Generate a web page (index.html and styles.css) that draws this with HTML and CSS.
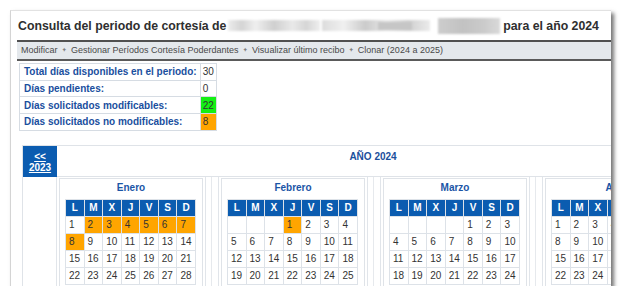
FILE: index.html
```html
<!DOCTYPE html>
<html lang="es">
<head>
<meta charset="utf-8">
<title>Consulta del periodo de cortesía</title>
<link rel="stylesheet" href="styles.css">
</head>
<body>
<div class="panel">
  <h1 class="title">Consulta del periodo de cortesía de <span class="blur"><span class="b1"></span><span class="b2"></span><span class="b4"></span><span class="b3"></span></span> para el año 2024</h1>
  <div class="navbar">
    <span>Modificar</span><span class="sep">✦</span><span>Gestionar Períodos Cortesía Poderdantes</span><span class="sep">✦</span><span>Visualizar último recibo</span><span class="sep">✦</span><span>Clonar (2024 a 2025)</span>
  </div>
  <table class="summary">
    <tr><td class="lbl">Total días disponibles en el periodo:</td><td class="val">30</td></tr>
    <tr><td class="lbl">Días pendientes:</td><td class="val">0</td></tr>
    <tr><td class="lbl">Días solicitados modificables:</td><td class="val green">22</td></tr>
    <tr><td class="lbl">Días solicitados no modificables:</td><td class="val orange">8</td></tr>
  </table>

  <div class="cal">
    <div class="cal-head">
      <div class="prev"><a>&lt;&lt;</a><a>2023</a></div>
      <div class="year">AÑO 2024</div>
    </div>
    <div class="cal-body">
      <div class="gutter"></div>
      <div class="mcol">
        <div class="month">
          <div class="mname">Enero</div>
          <table class="days">
            <tr><th>L</th><th>M</th><th>X</th><th>J</th><th>V</th><th>S</th><th>D</th></tr>
            <tr><td>1</td><td class="o">2</td><td class="o">3</td><td class="o">4</td><td class="o">5</td><td class="o">6</td><td class="o">7</td></tr>
            <tr><td class="o">8</td><td>9</td><td>10</td><td>11</td><td>12</td><td>13</td><td>14</td></tr>
            <tr><td>15</td><td>16</td><td>17</td><td>18</td><td>19</td><td>20</td><td>21</td></tr>
            <tr><td>22</td><td>23</td><td>24</td><td>25</td><td>26</td><td>27</td><td>28</td></tr>
          </table>
        </div>
      </div>
      <div class="msep"></div>
      <div class="mcol">
        <div class="month">
          <div class="mname">Febrero</div>
          <table class="days">
            <tr><th>L</th><th>M</th><th>X</th><th>J</th><th>V</th><th>S</th><th>D</th></tr>
            <tr><td></td><td></td><td></td><td class="o">1</td><td>2</td><td>3</td><td>4</td></tr>
            <tr><td>5</td><td>6</td><td>7</td><td>8</td><td>9</td><td>10</td><td>11</td></tr>
            <tr><td>12</td><td>13</td><td>14</td><td>15</td><td>16</td><td>17</td><td>18</td></tr>
            <tr><td>19</td><td>20</td><td>21</td><td>22</td><td>23</td><td>24</td><td>25</td></tr>
          </table>
        </div>
      </div>
      <div class="msep"></div>
      <div class="mcol">
        <div class="month">
          <div class="mname">Marzo</div>
          <table class="days">
            <tr><th>L</th><th>M</th><th>X</th><th>J</th><th>V</th><th>S</th><th>D</th></tr>
            <tr><td></td><td></td><td></td><td></td><td>1</td><td>2</td><td>3</td></tr>
            <tr><td>4</td><td>5</td><td>6</td><td>7</td><td>8</td><td>9</td><td>10</td></tr>
            <tr><td>11</td><td>12</td><td>13</td><td>14</td><td>15</td><td>16</td><td>17</td></tr>
            <tr><td>18</td><td>19</td><td>20</td><td>21</td><td>22</td><td>23</td><td>24</td></tr>
          </table>
        </div>
      </div>
      <div class="msep"></div>
      <div class="mcol">
        <div class="month">
          <div class="mname">Abril</div>
          <table class="days">
            <tr><th>L</th><th>M</th><th>X</th><th>J</th><th>V</th><th>S</th><th>D</th></tr>
            <tr><td>1</td><td>2</td><td>3</td><td>4</td><td>5</td><td>6</td><td>7</td></tr>
            <tr><td>8</td><td>9</td><td>10</td><td>11</td><td>12</td><td>13</td><td>14</td></tr>
            <tr><td>15</td><td>16</td><td>17</td><td>18</td><td>19</td><td>20</td><td>21</td></tr>
            <tr><td>22</td><td>23</td><td>24</td><td>25</td><td>26</td><td>27</td><td>28</td></tr>
          </table>
        </div>
      </div>
    </div>
  </div>
</div>
</body>
</html>
```

FILE: styles.css
```css
html, body {
  margin: 0;
  padding: 0;
  background: #fff;
}
body {
  font-family: "Liberation Sans", Arial, sans-serif;
  color: #333;
}
.panel {
  margin: 10px 0 0 10px;
  width: 600px;
  height: 275px;
  background: #fff;
  border-left: 1px solid #d4d4d4;
  border-top: 1px solid #e2e2e2;
  box-shadow: 3px 3px 4px rgba(0, 0, 0, 0.55);
  overflow: hidden;
}
.title {
  margin: 7px 0 0 7px;
  font-size: 12.3px;
  line-height: 15px;
  height: 15px;
  font-weight: bold;
  color: #2f2f2f;
  white-space: nowrap;
}
.blur {
  display: inline-block;
  position: relative;
  width: 274px;
  height: 16px;
  vertical-align: -4px;
  margin: 0 -2px;
  filter: blur(1.2px);
}
.blur span {
  position: absolute;
  top: 2px;
  height: 11px;
}
.blur .b1 { left: 0; width: 92px; background: linear-gradient(90deg, #ececec, #d4d4d4 15%, #efefef 30%, #cfcfcf 50%, #e9e9e9 70%, #d6d6d6 85%, #eeeeee); }
.blur .b2 { left: 94px; width: 108px; background: linear-gradient(90deg, #dcdcdc, #f0f0f0 20%, #cbcbcb 40%, #e8e8e8 60%, #d0d0d0 80%, #ebebeb); }
.blur .b4 { left: 150px; width: 34px; top: 4px; height: 8px; background: #c6c6c6; }
.blur .b3 { left: 210px; width: 62px; top: 0; height: 16px; background: linear-gradient(90deg, #cdcdcd, #c2c2c2 40%, #cbcbcb 75%, #dadada); }

.navbar {
  margin: 7px 0 0 6px;
  border-top: 2px solid #505050;
  border-bottom: 2px solid #5a5a5a;
  background: #e4e8ec;
  height: 17px;
  line-height: 17px;
  padding-left: 4px;
  font-size: 9px;
  color: #4a4a4a;
  white-space: nowrap;
}
.navbar .sep {
  font-family: "DejaVu Sans", sans-serif;
  font-size: 6.5px;
  color: #808080;
  margin: 0 4px;
  vertical-align: 1px;
}

.summary {
  margin: 2px 0 0 8px;
  border-collapse: collapse;
  border: 1px solid #d6dce3;
}
.summary td {
  border: 1px solid #d6dce3;
  height: 15.7px;
  padding: 0;
  line-height: 15px;
}
.summary .lbl {
  color: #1a4f9e;
  font-weight: bold;
  font-size: 10px;
  padding: 0 3px 0 4px;
  white-space: nowrap;
}
.summary .val {
  color: #333;
  font-size: 10px;
  padding: 0 1px 0 2px;
  width: 12px;
}
.summary .green { background: #14f014; }
.summary .orange { background: #ffa500; }

.cal {
  margin: 14px 0 0 11px;
  width: 800px;
  border-top: 1px solid #dfe3e8;
  border-left: 1px solid #dfe3e8;
}
.cal-head {
  display: flex;
  height: 30px;
  border-bottom: 1px solid #dfe3e8;
}
.prev {
  width: 34px;
  background: #0b5cb0;
  display: flex;
  flex-direction: column;
  align-items: center;
  padding-top: 5px;
  box-sizing: border-box;
  height: 31px;
}
.prev a {
  color: #fff;
  font-weight: bold;
  font-size: 10px;
  line-height: 11px;
  text-decoration: underline;
}
.year {
  width: 632px;
  text-align: center;
  color: #1b4f9c;
  font-weight: bold;
  font-size: 10px;
  padding-top: 4px;
  line-height: 13px;
}
.cal-body {
  display: flex;
  align-items: flex-start;
}
.gutter {
  width: 33px;
  height: 120px;
}
.mcol {
  border-left: 1px solid #e1e5ea;
  border-right: 1px solid #e1e5ea;
  padding: 1px 2px 0 2px;
  height: 120px;
}
.msep {
  width: 5px;
  height: 120px;
  border-right: 1px solid #e6e9ed;
  margin-right: 6px;
}
.month {
  width: 142px;
  border: 1px solid #dfe3e8;
  height: 130px;
}
.mname {
  text-align: center;
  color: #1b55a6;
  font-weight: bold;
  font-size: 10px;
  line-height: 14px;
  height: 20px;
  padding-top: 2px;
  box-sizing: border-box;
}
.days {
  margin-left: 5px;
  width: 131px;
  table-layout: fixed;
  border-collapse: separate;
  border-spacing: 1px;
  background: #dde2e8;
}
.days th {
  background: #0b5cb0;
  color: #fff;
  font-size: 10px;
  font-weight: bold;
  height: 16px;
  line-height: 16px;
  padding: 0;
  text-align: center;
}
.days td {
  background: #fff;
  font-size: 10px;
  color: #333;
  height: 16px;
  line-height: 16px;
  padding: 0 0 0 3px;
  text-align: left;
}
.days td.o {
  background: #ffa500;
}
```
